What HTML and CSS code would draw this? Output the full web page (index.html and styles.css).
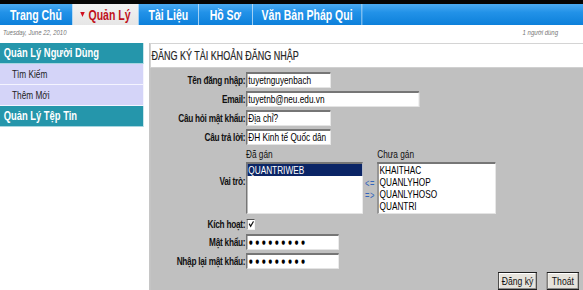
FILE: index.html
```html
<!DOCTYPE html>
<html>
<head>
<meta charset="utf-8">
<link rel="stylesheet" href="styles.css">
</head>
<body>
<div class="frame">
<div class="page">
  <div class="topline"></div>
  <nav class="tabs">
    <a class="tab t1">Trang Chủ</a>
    <a class="tab t2 active"><span class="tri"></span>Quản Lý</a>
    <a class="tab t3">Tài Liệu</a>
    <a class="tab t4">Hồ Sơ</a>
    <a class="tab t5">Văn Bản Pháp Qui</a>
  </nav>
  <div class="datebar">
    <span class="date">Tuesday, June 22, 2010</span>
    <span class="users">1 người dùng</span>
  </div>
  <div class="main">
    <aside class="side">
      <div class="side-head">Quản Lý Người Dùng</div>
      <div class="side-item">Tìm Kiếm</div>
      <div class="side-item">Thêm Mới</div>
      <div class="side-head">Quản Lý Tệp Tin</div>
    </aside>
    <section class="content">
      <div class="title">ĐĂNG KÝ TÀI KHOẢN ĐĂNG NHẬP</div>
      <div class="form">
        <div class="row"><label>Tên đăng nhập:</label><div class="input w-user">tuyetnguyenbach</div></div>
        <div class="row"><label>Email:</label><div class="input w-mail">tuyetnb@neu.edu.vn</div></div>
        <div class="row"><label>Câu hỏi mật khẩu:</label><div class="input w-user">Địa chỉ?</div></div>
        <div class="row"><label>Câu trả lời:</label><div class="input w-user">ĐH Kinh tế Quốc dân</div></div>
        <div class="row roles">
          <label>Vai trò:</label>
          <div class="rolebox">
            <div class="rolecol">
              <div class="cap">Đã gán</div>
              <div class="list l-left"><div class="opt sel">QUANTRIWEB</div></div>
            </div>
            <div class="arrows"><span>&lt;=</span><span>=&gt;</span></div>
            <div class="rolecol">
              <div class="cap">Chưa gán</div>
              <div class="list l-right">
                <div class="opt">KHAITHAC</div>
                <div class="opt">QUANLYHOP</div>
                <div class="opt">QUANLYHOSO</div>
                <div class="opt">QUANTRI</div>
              </div>
            </div>
          </div>
        </div>
        <div class="row chk"><label>Kích hoạt:</label><div class="checkbox"><svg width="8" height="8" viewBox="0 0 8 8"><path d="M1.2 3.8 L3.2 6.2 L7 1.4" fill="none" stroke="#111" stroke-width="1.5"/></svg></div></div>
        <div class="row"><label>Mật khẩu:</label><div class="input w-pw pw">●●●●●●●●●</div></div>
        <div class="row"><label>Nhập lại mật khẩu:</label><div class="input w-pw pw">●●●●●●●●●</div></div>
        <div class="buttons"><button class="btn b1">Đăng ký</button><button class="btn b2">Thoát</button></div>
      </div>
    </section>
  </div>
</div>
</div>
</body>
</html>
```
FILE: styles.css
```css
* { box-sizing: border-box; }
html, body { margin: 0; padding: 0; background: #fff; overflow: hidden; }
body { width: 583px; height: 290px; }
.frame { width: 583px; height: 290px; overflow: hidden; }
.page {
  width: 778px; height: 290px;
  transform: scaleX(0.75); transform-origin: 0 0;
  font-family: "Liberation Sans", Arial, sans-serif;
  display: flex; flex-direction: column;
}
.topline { height: 4px; background: #050505; flex: none; }
.tabs {
  display: flex; height: 21px; flex: none;
  background: linear-gradient(#4aaaf3, #2292e8 40%, #0d80da);
}
.tab {
  display: flex; align-items: center; justify-content: center;
  color: #fff; font-weight: bold; font-size: 14px;
  border-right: 1px solid #cfe7fa;
  height: 100%;
}
.t1 { width: 97px; }
.t2 { width: 88px; }
.t3 { width: 80px; }
.t4 { width: 72px; }
.t5 { width: 146px; }
.tab.active {
  background: linear-gradient(#f2f2f2, #e6e6e6);
  color: #c0101a;
}
.tri {
  width: 0; height: 0; margin-right: 5px;
  border-left: 3px solid transparent; border-right: 3px solid transparent;
  border-top: 5px solid #d01020;
}
.datebar {
  height: 18px; flex: none; display: flex; justify-content: space-between; align-items: center;
  padding: 0 34px 3px 4px;
  font-style: italic; font-size: 8px; color: #777;
}
.main { display: flex; flex: 1; min-height: 0; }
.side { width: 199px; flex: none; padding-right: 8px; }
.side-head {
  height: 21px; background: #2596ab; color: #fff; font-weight: bold;
  font-size: 12.5px; display: flex; align-items: center; padding-left: 5px;
  border-bottom: 1px solid #a6d6e0;
}
.side-item {
  height: 21px; background: #d4d4f8; color: #222; font-size: 11px;
  display: flex; align-items: center; padding-left: 16px;
  border-bottom: 1px solid #f4f4ff;
}
.content {
  flex: 1; display: flex; flex-direction: column;
  border-left: 2px solid #b4b4b4;
}
.title {
  height: 25px; flex: none; background: #fff;
  border-top: 1px solid #d4d4d4; border-bottom: 1px solid #d0d0d0;
  font-size: 12px; color: #262626; display: flex; align-items: center; padding-left: 1px;
  -webkit-text-stroke: 0.2px #262626;
}
.form { flex: 1; background: #c0c0c0; padding-top: 4px; }
.row { display: flex; align-items: center; margin-bottom: 3px; }
.row label {
  width: 127px; flex: none; text-align: right; font-weight: bold; font-size: 11px; color: #111;
  padding-right: 1px; letter-spacing: -0.35px;
}
.input {
  height: 16px; background: #fff; font-size: 11px; color: #000;
  border-top: 2px solid #767676; border-left: 2px solid #767676;
  border-right: 1px solid #e4e4e4; border-bottom: 1px solid #e4e4e4;
  padding-left: 1px; line-height: 13px; white-space: nowrap; overflow: hidden;
}
.w-user { width: 113px; }
.w-mail { width: 231px; }
.w-pw { width: 124px; }
.pw { font-size: 5.5px; letter-spacing: 3.9px; font-family: "DejaVu Sans", sans-serif; line-height: 13px; padding-left: 2px; }
.rolebox { display: flex; align-items: flex-end; }
.rolecol { display: flex; flex-direction: column; }
.cap { font-size: 11px; color: #111; height: 14px; line-height: 12px; }
.list {
  background: #fff; height: 52px;
  border-top: 2px solid #767676; border-left: 2px solid #767676;
  border-right: 1px solid #e4e4e4; border-bottom: 1px solid #e4e4e4;
  font-size: 11px;
}
.l-left { width: 156px; }
.l-right { width: 158px; }
.opt { height: 12px; line-height: 12px; padding-left: 1px; color: #000; }
.opt.sel { background: #0b2566; color: #fff; }
.arrows {
  width: 19px; display: flex; flex-direction: column; align-items: center;
  font-size: 10px; line-height: 12px; color: #3366bb; padding-bottom: 12px;
  letter-spacing: 1px;
}
.chk { height: 14px; }
.checkbox {
  width: 11px; height: 11px; background: #fff; margin-left: 1px;
  border-top: 1px solid #555; border-left: 1px solid #555;
  border-right: 1px solid #f0f0f0; border-bottom: 1px solid #f0f0f0;
  display: flex; align-items: center; justify-content: center;
}
.buttons { display: flex; justify-content: flex-end; gap: 13px; padding-right: 6px; margin-top: 2px; }
.btn {
  height: 18px; font-family: inherit; font-size: 11.5px; background: #e6e3dc; color: #111;
  border: 1px solid #1e1e1e; box-shadow: inset -1px -1px #8a8a8a, inset 1px 1px #fff;
  padding: 0; margin: 0;
}
.b1 { width: 52px; }
.b2 { width: 43px; }
```
